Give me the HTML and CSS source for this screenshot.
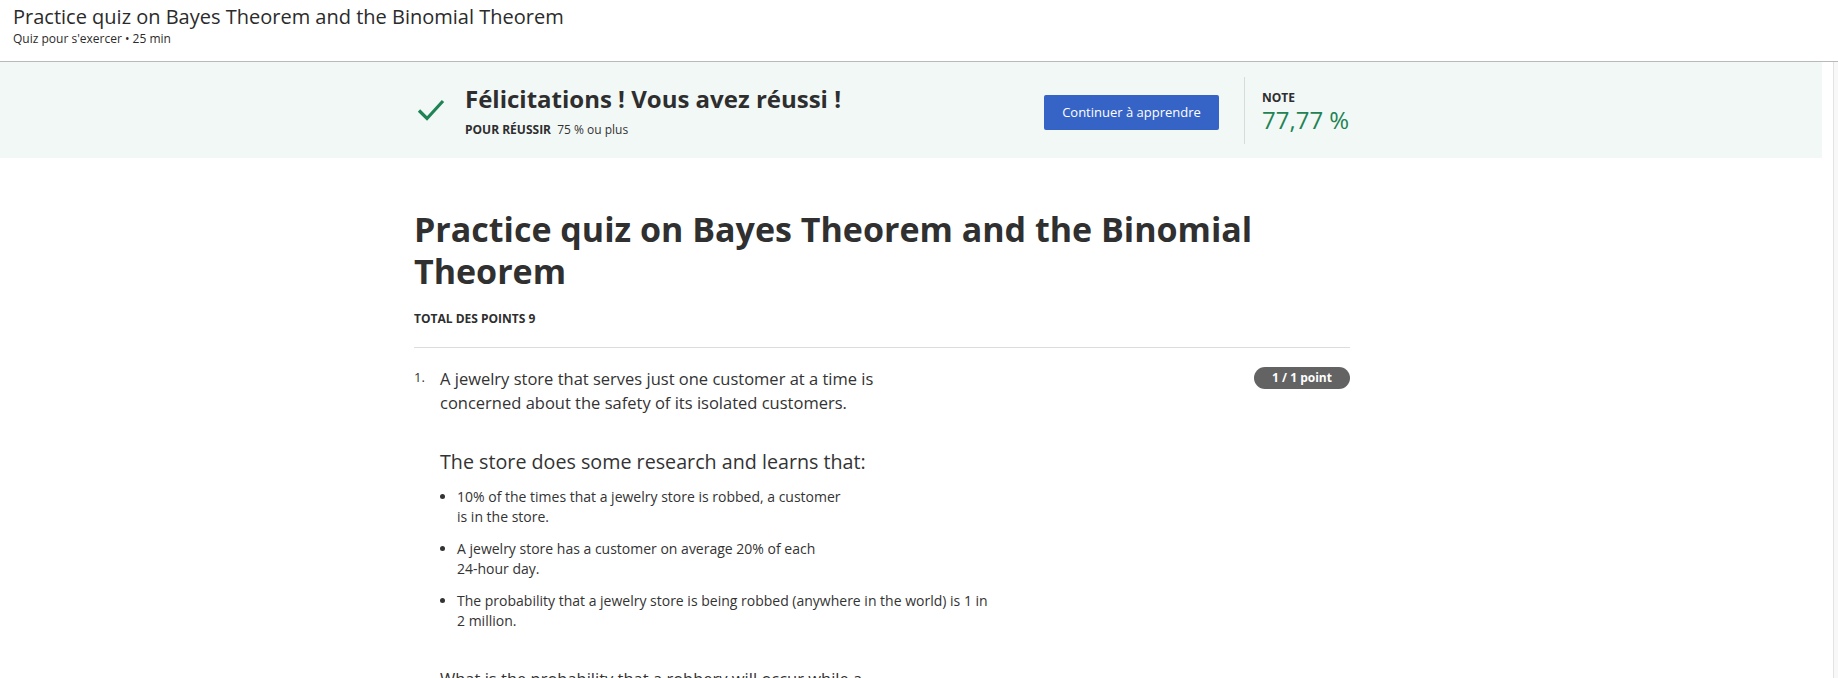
FILE: index.html
```html
<!DOCTYPE html>
<html lang="fr">
<head>
<meta charset="utf-8">
<title>Practice quiz on Bayes Theorem and the Binomial Theorem</title>
<link rel="stylesheet" href="styles.css">
</head>
<body>
<header class="topbar">
  <div class="topbar-title">Practice quiz on Bayes Theorem and the Binomial Theorem</div>
  <div class="topbar-sub">Quiz pour s'exercer • 25 min</div>
</header>
<div class="viewport">
  <main class="main">
    <section class="banner">
      <div class="banner-inner">
        <svg class="check" width="28" height="24" viewBox="0 0 28 24" aria-hidden="true">
          <path d="M2 12.5 L10 20.5 L26 3" fill="none" stroke="#1f8354" stroke-width="3.2"/>
        </svg>
        <div class="banner-text">
          <div class="banner-title">Félicitations ! Vous avez réussi !</div>
          <div class="banner-pass"><span class="label">POUR RÉUSSIR</span> 75 % ou plus</div>
        </div>
        <button class="btn">Continuer à apprendre</button>
        <div class="divider"></div>
        <div class="grade">
          <div class="label">NOTE</div>
          <div class="grade-value">77,77 %</div>
        </div>
      </div>
    </section>
    <section class="content">
      <div class="column">
        <h1 class="quiz-title">Practice quiz on Bayes Theorem and the Binomial Theorem</h1>
        <div class="total label">TOTAL DES POINTS 9</div>
        <div class="question">
          <div class="qnum">1.</div>
          <div class="qbody">
            <p class="qtext">A jewelry store that serves just one customer at a time is<br>concerned about the safety of its isolated customers.</p>
            <p class="qtext spacer1">&nbsp;</p>
            <p class="qlead">The store does some research and learns that:</p>
            <ul class="facts">
              <li>10% of the times that a jewelry store is robbed, a customer<br>is in the store.</li>
              <li>A jewelry store has a customer on average 20% of each<br>24-hour day.</li>
              <li>The probability that a jewelry store is being robbed (anywhere in the world) is 1 in<br>2 million.</li>
            </ul>
            <p class="qtext spacer2">&nbsp;</p>
            <p class="qtext">What is the probability that a robbery will occur while a</p>
          </div>
          <div class="badge">1 / 1 point</div>
        </div>
      </div>
    </section>
  </main>
  <div class="scrollbar"></div>
</div>
</body>
</html>
```
FILE: styles.css
```css
* { box-sizing: border-box; }
html, body { margin: 0; padding: 0; }
body {
  width: 1838px;
  height: 678px;
  overflow: hidden;
  font-family: "Open Sans", "Noto Sans", sans-serif;
  color: #1f1f1f;
  background: #fff;
  display: flex;
  flex-direction: column;
}
.topbar {
  height: 62px;
  padding: 4px 13px 0;
  border-bottom: 1px solid #b9b9b9;
  flex: none;
}
.topbar-title {
  font-size: 20px;
  line-height: 26px;
  color: #2b2b2b;
}
.topbar-sub {
  font-size: 12px;
  line-height: 18px;
  color: #2b2b2b;
}
.viewport {
  flex: 1;
  display: flex;
  min-height: 0;
}
.main {
  flex: 1;
  overflow: hidden;
}
.scrollbar {
  width: 16px;
  flex: none;
  background: linear-gradient(to right, #fff 0 11px, #e3e3e3 11px 12px, #f8f8f8 12px);
}
.banner {
  background: #f2f8f6;
  height: 96px;
}
.banner-inner, .column {
  width: 936px;
  margin-left: 414px;
}
.banner-inner {
  height: 100%;
  display: flex;
  align-items: center;
}
.check { flex: none; margin: 0 20px 0 3px; }
.banner-text { flex: 1; padding-top: 2px; }
.banner-title {
  font-size: 24px;
  font-weight: 700;
  line-height: 32px;
  color: #2e2e2e;
}
.banner-pass {
  font-size: 12px;
  line-height: 18px;
  margin-top: 6px;
  color: #333;
}
.label {
  font-weight: 700;
  font-size: 12px;
  color: #2e2e2e;
}
.banner-pass .label { margin-right: 3px; }
.btn {
  flex: none;
  width: 175px;
  height: 35px;
  border: none;
  border-radius: 2px;
  background: #3563c6;
  color: #fff;
  font-family: inherit;
  font-size: 13px;
  font-weight: 500;
  margin-top: 4px;
}
.divider {
  flex: none;
  width: 1px;
  height: 67px;
  background: #dadada;
  margin: 0 17px 0 25px;
}
.grade { flex: none; width: 88px; padding-top: 4px; }
.grade .label { line-height: 16px; }
.grade-value {
  font-size: 24px;
  line-height: 28px;
  color: #1f8354;
}
.content { padding-top: 50px; }
.quiz-title {
  margin: 0;
  font-size: 34px;
  line-height: 42px;
  font-weight: 700;
  color: #303030;
}
.total {
  margin-top: 18px;
  line-height: 18px;
  font-size: 12px;
}
.question {
  margin-top: 19px;
  border-top: 1px solid #dcdcdc;
  padding-top: 19px;
  display: flex;
  align-items: flex-start;
}
.qnum {
  width: 26px;
  flex: none;
  font-size: 13px;
  line-height: 20px;
  color: #333;
}
.qbody { flex: 1; }
.qtext {
  margin: 0;
  font-size: 16.5px;
  line-height: 24px;
  color: #333;
}
.qlead {
  margin: 0;
  font-size: 19.7px;
  line-height: 30px;
  color: #333;
}
.spacer1 { height: 32px; }
.spacer2 { height: 36px; }
.facts {
  margin: 10px 0 0;
  padding-left: 17px;
  font-size: 14px;
  line-height: 20px;
  color: #333;
}
.facts li + li { margin-top: 12px; }
.badge {
  flex: none;
  height: 22px;
  border-radius: 11px;
  background: #636363;
  color: #fff;
  font-size: 12px;
  font-weight: 700;
  line-height: 22px;
  width: 96px;
  text-align: center;
}
```
